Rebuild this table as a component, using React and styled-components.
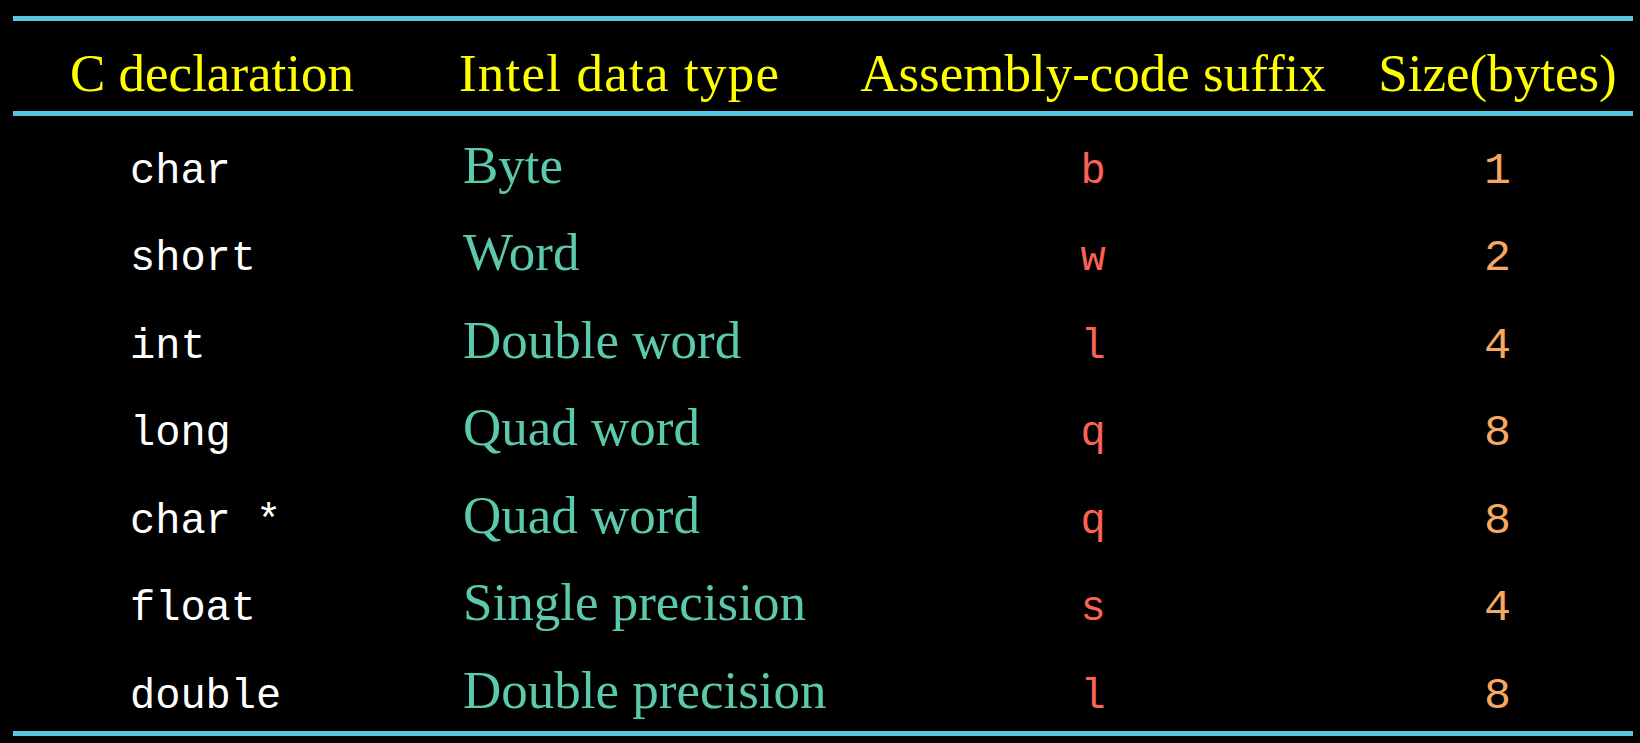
import React from 'react';
import styled, { createGlobalStyle } from 'styled-components';

const GlobalStyle = createGlobalStyle`
  html, body {
    margin: 0;
    padding: 0;
    background: #000;
  }
  body {
    width: 1640px;
    height: 743px;
    overflow: hidden;
  }
`;

const COLUMNS = '427px 410px 486px 1fr';

const rows = [
  ['char', 'Byte', 'b', '1'],
  ['short', 'Word', 'w', '2'],
  ['int', 'Double word', 'l', '4'],
  ['long', 'Quad word', 'q', '8'],
  ['char *', 'Quad word', 'q', '8'],
  ['float', 'Single precision', 's', '4'],
  ['double', 'Double precision', 'l', '8'],
];

const App = () => {
  return (
    <>
      <GlobalStyle />
      <Page>
        <Table>
          <Rule />
          <HeadRow>
            <HeadCell $pad={57}>C declaration</HeadCell>
            <HeadCell $pad={19} $spread={1.2}>Intel data type</HeadCell>
            <HeadCell $center>Assembly-code suffix</HeadCell>
            <HeadCell $center $pad={26}>Size(bytes)</HeadCell>
          </HeadRow>
          <Rule />
          <Body>
            {rows.map((r, i) => (
              <Row key={i}>
                <Decl>{r[0]}</Decl>
                <TypeName>{r[1]}</TypeName>
                <Suffix>{r[2]}</Suffix>
                <Size>{r[3]}</Size>
              </Row>
            ))}
          </Body>
          <Rule />
        </Table>
      </Page>
    </>
  );
};

export default App;

const Page = styled.div`
  box-sizing: border-box;
  height: 743px;
  padding: 16px 0 0 13px;
  background: #000;
`;

const Table = styled.div`
  width: 1620px;
`;

const Rule = styled.div`
  height: 5px;
  background: #58c4dd;
`;

const HeadRow = styled.div`
  box-sizing: border-box;
  height: 90px;
  padding-top: 26px;
  display: grid;
  grid-template-columns: ${COLUMNS};
  align-items: baseline;
`;

const HeadCell = styled.div`
  font-family: "Liberation Serif", "Times New Roman", serif;
  font-size: 53px;
  line-height: 1;
  color: #ffff00;
  white-space: nowrap;
  letter-spacing: ${p => p.$spread || 0}px;
  text-align: ${p => (p.$center ? 'center' : 'left')};
  padding-left: ${p => p.$pad || 0}px;
`;

const Body = styled.div`
  display: flex;
  flex-direction: column;
  gap: 31.5px;
  padding: 22.5px 0 11.5px;
`;

const Row = styled.div`
  height: 56px;
  display: grid;
  grid-template-columns: ${COLUMNS};
  align-items: baseline;
`;

const Mono = styled.div`
  font-family: "Liberation Mono", "Courier New", monospace;
  font-size: 42px;
  line-height: 1;
  white-space: pre;
`;

const Decl = styled(Mono)`
  color: #ffffff;
  padding-left: 117px;
`;

const TypeName = styled.div`
  font-family: "Liberation Serif", "Times New Roman", serif;
  font-size: 53px;
  line-height: 1;
  color: #5cc9ad;
  padding-left: 23px;
  white-space: nowrap;
`;

const Suffix = styled(Mono)`
  color: #fc6255;
  text-align: center;
`;

const Size = styled(Mono)`
  font-size: 45px;
  color: #f5a862;
  text-align: center;
  padding-left: 26px;
`;
